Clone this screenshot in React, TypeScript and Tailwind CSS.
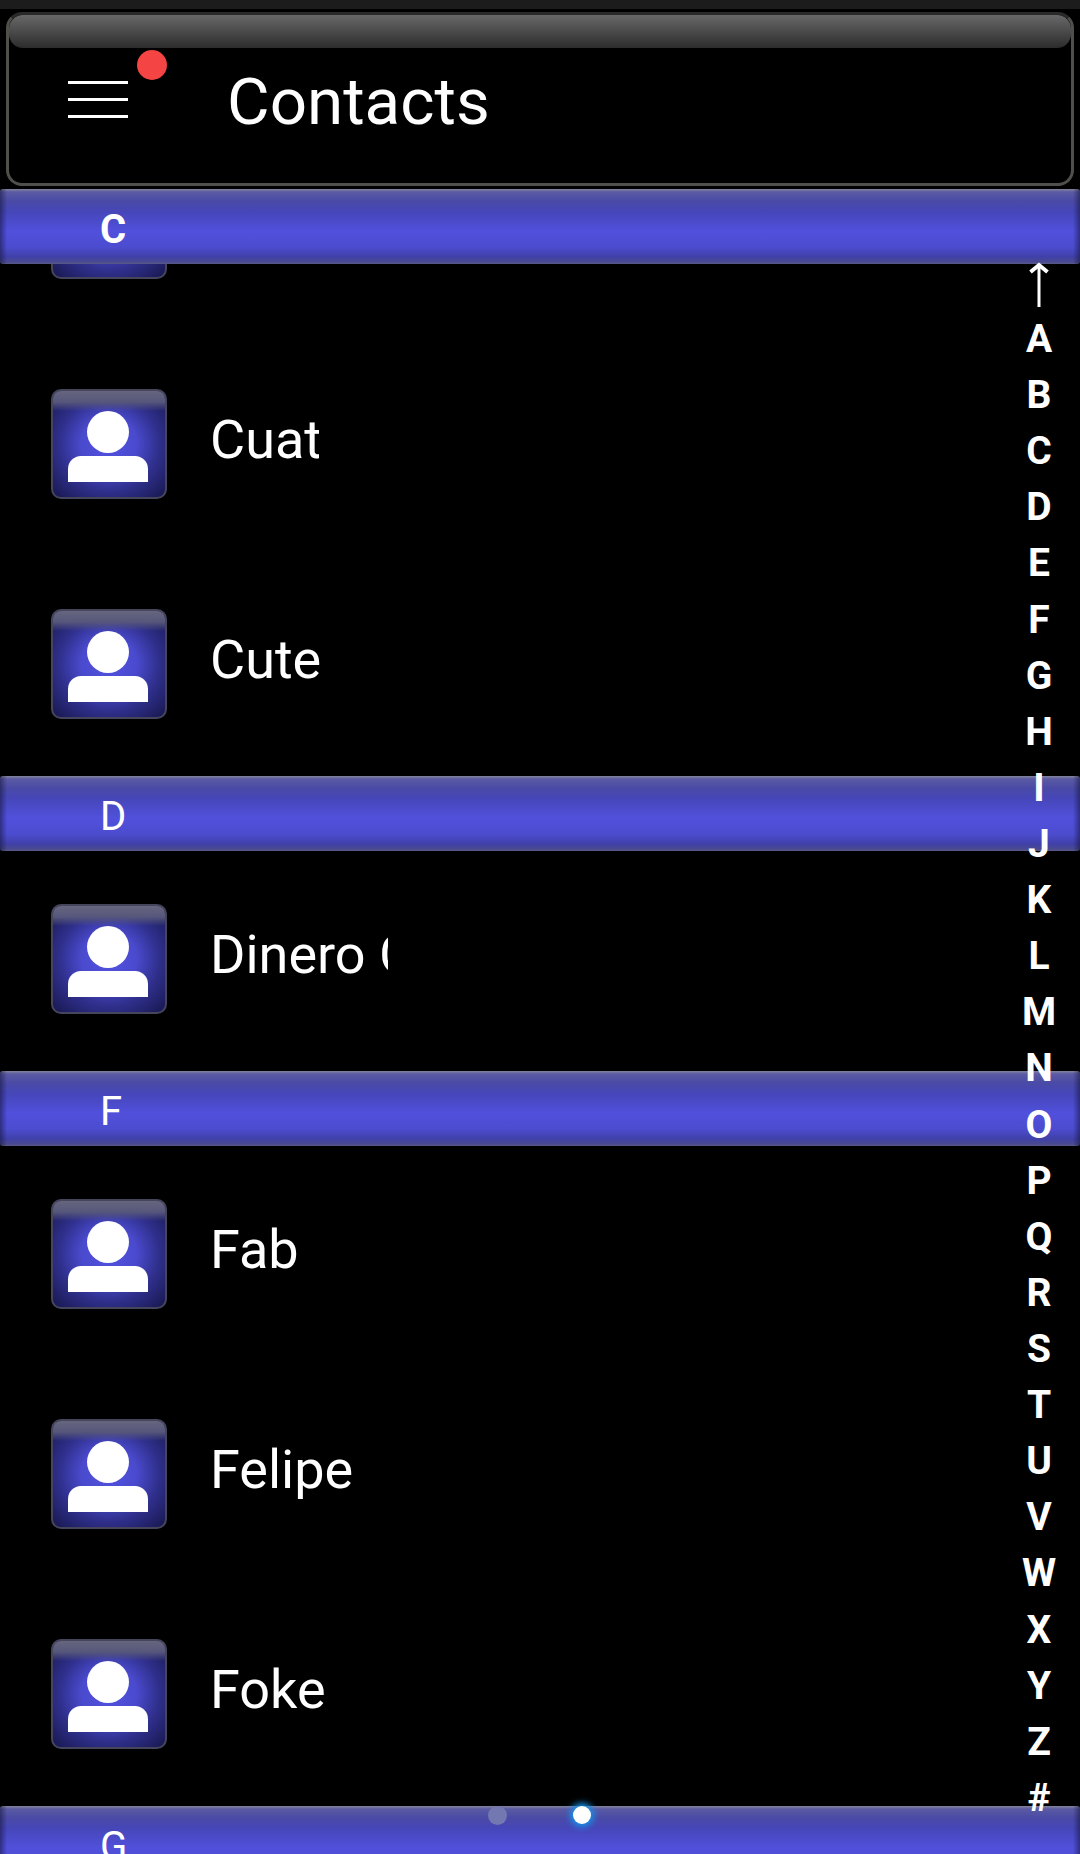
import React from 'react';

const LETTERS = 'ABCDEFGHIJKLMNOPQRSTUVWXYZ#'.split('');

function Avatar() {
  return (
    <div className="relative w-[116px] h-[110px] shrink-0 rounded-[10px] border-2 border-[#45455c] overflow-hidden bg-[radial-gradient(ellipse_at_50%_50%,#5252e0_0%,#4a4ace_35%,#30308e_62%,#17174e_100%)]">
      <div className="h-[20px] bg-[linear-gradient(#66667e_0%,#56567c_55%,rgba(70,70,130,0)_100%)]" />
      <svg className="absolute left-0 top-0" width="112" height="106" viewBox="0 0 112 106">
        <circle cx="55" cy="41" r="21" fill="#fff" />
        <path d="M15 91V78a13 13 0 0 1 13-13h54a13 13 0 0 1 13 13v13z" fill="#fff" />
      </svg>
    </div>
  );
}

function SectionBar({ label, bold }: { label: string; bold?: boolean }) {
  return (
    <div className="h-[75px] shrink-0 relative flex items-center pl-[100px] pt-[5px] rounded-[3px] overflow-hidden bg-[linear-gradient(#84849c_0px,#5a5aa4_3px,#4a4aa6_12px,#4646b8_22px,#5050dc_42px,#4c4cd0_58px,#4040a8_68px,#4a4a90_73px,#5a5a88_75px)]">
      <div className="absolute inset-y-0 left-0 w-[7px] bg-[linear-gradient(90deg,rgba(20,20,60,0.55),rgba(20,20,60,0))]" />
      <div className="absolute inset-y-0 right-0 w-[7px] bg-[linear-gradient(270deg,rgba(20,20,60,0.55),rgba(20,20,60,0))]" />
      <span className={`text-[40px] leading-[47px] text-white ${bold ? 'font-bold' : 'font-normal'}`}>{label}</span>
    </div>
  );
}

function ContactRow({ name, clip }: { name: string; clip: string }) {
  return (
    <div className="h-[220px] shrink-0 flex items-center gap-[43px] pl-[51px] pb-[4px]">
      <Avatar />
      <div className={`text-[54px] leading-[64px] text-white whitespace-nowrap overflow-hidden pb-[8px] ${clip}`}>{name}</div>
    </div>
  );
}

export default function App() {
  return (
    <div className="relative w-[1080px] h-[1854px] overflow-hidden bg-black font-['Roboto',sans-serif]">
      <div className="h-[9px] bg-[#1c1c1c]" />
      <div className="h-[180px] pt-[3px] px-[6px]">
        <div className="h-[174px] flex flex-col rounded-[16px] border-[3px] border-[#4f4f4b] border-t-[#2a2a2a] bg-black">
          <div className="h-[33px] shrink-0 rounded-[14px] bg-[linear-gradient(#686868,#2c2c2c)]" />
          <div className="relative flex items-center pl-[59px] gap-[99px] h-[100px] mt-[1px]">
            <div className="w-[60px] flex flex-col gap-[14px]">
              <div className="h-[3px] bg-white" />
              <div className="h-[3px] bg-white" />
              <div className="h-[3px] bg-white" />
            </div>
            <div className="absolute left-[128px] top-[1px] w-[30px] h-[30px] rounded-full bg-[#f44444]" />
            <div className="text-[65.5px] leading-[76px] text-white pt-[6px]">Contacts</div>
          </div>
        </div>
      </div>
      <SectionBar label="C" bold />
      <div className="h-[72px] overflow-hidden flex pl-[51px]">
        <div className="-mt-[95px]">
          <Avatar />
        </div>
      </div>
      <ContactRow name="Cuat" clip="w-[109px]" />
      <ContactRow name="Cute" clip="w-[111px]" />
      <SectionBar label="D" />
      <ContactRow name="Dinero Gold" clip="w-[178px]" />
      <SectionBar label="F" />
      <ContactRow name="Fab" clip="w-[110px]" />
      <ContactRow name="Felipe" clip="w-[180px]" />
      <ContactRow name="Foke" clip="w-[114px]" />
      <SectionBar label="G" />

      <div className="absolute left-[999px] top-[255px] w-[80px] flex flex-col items-center text-white font-bold text-[39px] leading-[56.12px]">
        <svg width="24" height="56" viewBox="0 0 24 56" fill="none" stroke="#fff">
          <path d="M12 52V9" strokeWidth="3" />
          <path d="M3.5 17L12 10l8.5 7" strokeWidth="4" />
        </svg>
        {LETTERS.map((l) => (
          <div key={l} className="h-[56.12px]">{l}</div>
        ))}
      </div>

      <div className="absolute left-[488px] top-[1806px] w-[19px] h-[19px] rounded-full bg-[#7478b0]" />
      <div className="absolute left-[573px] top-[1806px] w-[18px] h-[18px] rounded-full bg-white shadow-[0_0_6px_3px_#1590e8]" />
    </div>
  );
}
